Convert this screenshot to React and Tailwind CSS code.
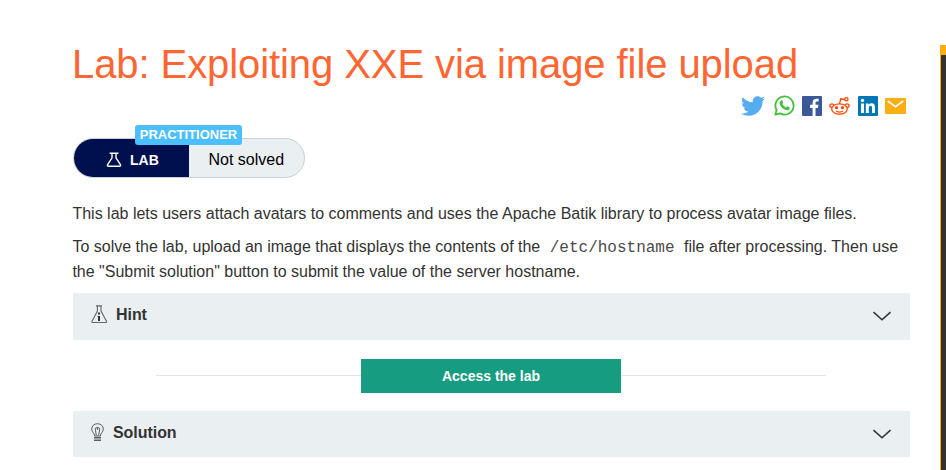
import React from "react";
import { FaTwitter } from "react-icons/fa";

function Flask({ className }) {
  return (
    <svg className={className} viewBox="0 0 16 16" fill="none" stroke="currentColor" strokeWidth="1.4" strokeLinejoin="round">
      <path d="M3.6 1.2h8.8M6 1.2v4.6L1.6 12.6c-.6 1 0 1.7 1 1.7h10.8c1 0 1.6-.7 1-1.7L10 5.8V1.2" />
    </svg>
  );
}

function WhatsApp() {
  return (
    <svg className="size-[21px]" viewBox="0 0 21 21">
      <path d="M1.3 19.7 2.6 15A9.1 9.1 0 1 1 6 18.4z" fill="none" stroke="#43c03e" strokeWidth="1.8" strokeLinejoin="round" />
      <path
        d="M7.5 5.3c.5-.1.8 0 1 .5l.7 1.7c.1.4-.8 1.3-.8 1.6.8 1.5 2 2.6 3.6 3.3.4.1 1.1-1.3 1.5-1.2l2.1 1c.3.2.1 1.2-.1 1.7-.5.9-1.7 1.5-2.7 1.4-3.1-.5-5.9-3-7-5.7-.6-1.5 0-3.8 1.7-4.3z"
        fill="#43c03e"
      />
    </svg>
  );
}

function Reddit() {
  return (
    <svg className="mr-px h-5 w-[21px]" viewBox="0 0 21 20" fill="none" stroke="#ff4500" strokeWidth="1.3">
      <ellipse cx="10.5" cy="13" rx="7.8" ry="5.2" />
      <path d="M3.3 11.2C1.5 11.800.3 9.9 1.2 8.7c1-1.3 3-1 3.7.2M17.700 11.2c1.800.6 3-1.3 2.100-2.500-1-1.300-3-1-3.700.2M10.500 7.800l1.200-5 4 .7" />
      <circle cx="17.400" cy="3.200" r="1.600" />
      <path d="M7.200 15.100c1.700 1.300 4.900 1.300 6.600 0" />
      <circle cx="7.500" cy="11.700" r="1.600" fill="#ff4500" stroke="none" />
      <circle cx="13.500" cy="11.700" r="1.600" fill="#ff4500" stroke="none" />
    </svg>
  );
}

function HintIcon() {
  return (
    <svg className="h-[19px] w-[17px]" viewBox="0 0 17 19" fill="none" stroke="#666" strokeWidth="1.1">
      <path d="M5 .9h6M6.4 1v5L1 16.3c-.3.7 0 1.2.7 1.2h13.1c.7 0 1-.5.7-1.2L10 6V1" />
      <path d="M8 7.5v2M8 11v5" stroke="#333" strokeWidth="2" />
      <path d="M6.500 11.500h1.500" stroke="#333" strokeWidth="1" />
    </svg>
  );
}

function BulbIcon() {
  return (
    <svg className="mr-px h-[19px] w-[13px]" viewBox="0 0 13 19" fill="none" stroke="#5c5e5e" strokeWidth="1">
      <path d="M3.6 13C3.6 9.7.7 9.4.7 6.2.7 2.9 3.2.7 6.5.7s5.8 2.2 5.8 5.5c0 3.2-2.9 3.5-2.9 6.8z" />
      <path d="M5.3 12.5 4.2 5.4l2.2-1V7M6.4 4.4l2.4 1-1.2 7.1" />
      <path d="M3 14.5h7M3 16h7M3 17.5h7" strokeWidth="1.2" />
    </svg>
  );
}

function Panel({ icon, title, className }) {
  return (
    <div className={`flex justify-between bg-[#eaeff2] pr-[19px] pl-[18px] ${className}`}>
      <div className="flex items-start pt-3">
        {icon}
        <span className="pl-2 text-[16px] leading-5 font-bold tracking-[-0.05px]">{title}</span>
      </div>
      <svg className="mt-[18px] h-[11px] w-[18px]" viewBox="0 0 18 11" fill="none" stroke="#333332" strokeWidth="1.6">
        <path d="M.5 1.2 9 8.8l8.5-7.6" />
      </svg>
    </div>
  );
}

export default function App() {
  return (
    <div className="flex h-[470px] w-[946px] justify-between overflow-hidden bg-white font-['Liberation_Sans',Arial,sans-serif] text-[#333332]">
      <main className="ml-[73px] w-[837px]">
        <h1 className="-ml-px mt-[40px] h-[55px] text-[40px] leading-[48px] tracking-[-0.08px] whitespace-nowrap text-[#ff6633]">
          Lab: Exploiting XXE via image file upload
        </h1>
        <div className="flex h-[21px] items-center justify-end gap-[7px] pr-1">
          <FaTwitter className="mr-[2px] size-6 text-[#55acee]" />
          <WhatsApp />
          <svg className="size-5" viewBox="0 0 20 20">
            <rect width="20" height="20" rx="1" fill="#3b5998" />
            <path d="M10.6 20v-8.1H8.1V8.8h2.5V6.5c0-2.5 1.5-3.8 3.8-3.8 1 0 1.9.1 2.2.1v2.7H15c-1.2 0-1.5.6-1.5 1.5v1.8h2.9l-.4 3.1h-2.5V20z" fill="#fff" />
          </svg>
          <Reddit />
          <svg className="size-5" viewBox="0 0 20 20">
            <rect width="20" height="20" rx="1" fill="#0077b5" />
            <circle cx="4.5" cy="4.5" r="1.7" fill="#fff" />
            <path d="M3 7.5h3V17H3zM7.8 7.5h2.8v1.3c.5-.9 1.5-1.5 2.9-1.5 2.8 0 3.5 1.8 3.5 4.4V17h-3v-4.7c0-1.2-.1-2.5-1.5-2.5s-1.7 1.1-1.7 2.4V17h-3z" fill="#fff" />
          </svg>
          <svg className="h-4 w-[21px]" viewBox="0 0 21 16">
            <rect width="21" height="16" rx="1" fill="#ffad10" />
            <path d="m2.7 3 7.8 5.8L18.3 3" fill="none" stroke="#fff" strokeWidth="1.7" />
          </svg>
        </div>
        <div className="relative mt-[22px] flex h-10 w-[232px] overflow-visible rounded-full border border-[#c9cfd2] bg-[#eaeff2]">
          <div className="flex w-[115px] items-center rounded-l-full bg-[#00104e] pt-1 pl-8 text-white">
            <Flask className="size-4" />
            <span className="pl-2 text-[14px] font-bold">LAB</span>
          </div>
          <span className="pt-[9px] pl-[19.5px] text-[16px] leading-6 text-black">Not solved</span>
          <span className="absolute -top-[14px] left-[61px] h-5 w-[107px] rounded-[3px] bg-[#4bbfff] text-center text-[13px] leading-5 font-bold text-white">
            PRACTITIONER
          </span>
        </div>
        <p className="-ml-[0.6px] mt-[23px] text-[16px] leading-[25px] whitespace-nowrap">
          This lab lets users attach avatars to comments and uses the Apache Batik library to process avatar image files.
        </p>
        <p className="-ml-[0.6px] mt-2 text-[16px] leading-[25px] whitespace-nowrap">
          To solve the lab, upload an image that displays the contents of the{" "}
          <code className="px-[5px] font-['Liberation_Mono',monospace] text-[16px] leading-none text-[#4a4a49]">/etc/hostname</code>{" "}
          file after processing. Then use
          <br />
          the "Submit solution" button to submit the value of the server hostname.
        </p>
        <Panel className="mt-[9px] h-[47px]" icon={<HintIcon />} title="Hint" />
        <div className="mt-[19px] flex h-[34px] items-center justify-center pr-px">
          <div className="-mt-px h-px w-[205px] bg-[#e2e4e5]" />
          <button className="h-[34px] w-[260px] bg-[#169c81] text-[14px] font-bold text-white">Access the lab</button>
          <div className="-mt-px h-px w-[205px] bg-[#e2e4e5]" />
        </div>
        <Panel className="mt-[18px] h-[46px]" icon={<BulbIcon />} title="Solution" />
      </main>
      <aside className="mt-[45px] w-[6px] border-t-[10px] border-l border-[#ffad10] bg-[#333332]" />
    </div>
  );
}
